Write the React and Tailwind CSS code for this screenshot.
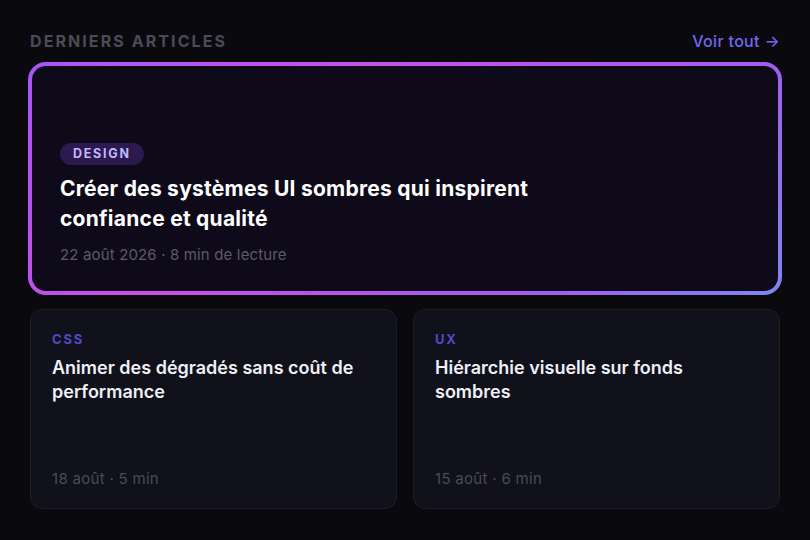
import React from 'react';

const posts = [
  { tag: 'CSS', title: 'Animer des dégradés sans coût de performance', meta: '18 août · 5 min' },
  { tag: 'UX', title: 'Hiérarchie visuelle sur fonds sombres', meta: '15 août · 6 min' },
];

export default function App() {
  return (
    <div className="min-h-screen w-full bg-[#0a0a0e] px-[30px] pt-[30px] font-['Inter','Noto_Sans',sans-serif]">
      <div className="flex h-[22px] items-center justify-between mb-[10px]">
        <h2 className="text-[16px] font-bold uppercase tracking-[0.13em] text-[#4a4b55] leading-[22px]">Derniers articles</h2>
        <a href="#" className="text-[16px] font-medium tracking-[0.02em] text-[#7367f0] leading-[22px]">Voir tout →</a>
      </div>

      {/* Featured */}
      <div className="-mx-[2px] h-[233px] rounded-[18px] p-[4px] bg-[linear-gradient(135deg,#a855f7_0%,#c94fe6_35%,#a35cf0_75%,#7d86f2_100%)]">
        <div className="flex h-full flex-col justify-end rounded-[14px] bg-[#0e0a1a] px-7 pb-[26px]">
          <span className="self-start rounded-full bg-[#2a1a4f] px-[13px] h-[22px] flex items-center text-[12.5px] font-bold uppercase tracking-[0.14em] text-[#c4b5fd]">Design</span>
          <h3 className="mt-[9px] max-w-[520px] text-[21px] font-bold tracking-[0.012em] leading-[30px] text-white">
            Créer des systèmes UI sombres qui inspirent confiance et qualité
          </h3>
          <p className="mt-[11px] text-[15px] tracking-[0.01em] leading-[20px] text-[#5c5a6b]">22 août 2026 · 8 min de lecture</p>
        </div>
      </div>

      <div className="mt-[14px] grid grid-cols-2 gap-4">
        {posts.map((p) => (
          <div key={p.tag} className="flex h-[200px] flex-col rounded-[12px] border border-[#1c1d27] bg-[#10111a] px-[21px] pt-[21px] pb-[19px]">
            <span className="text-[13px] font-bold uppercase tracking-[0.14em] leading-[16px] text-[#5048c8]">{p.tag}</span>
            <h4 className="mt-[9px] pr-4 text-[18px] font-semibold leading-[24px] text-[#eef0f5]">{p.title}</h4>
            <p className="mt-auto text-[15px] tracking-[0.02em] leading-[20px] text-[#4a4b57]">{p.meta}</p>
          </div>
        ))}
      </div>
    </div>
  );
}
